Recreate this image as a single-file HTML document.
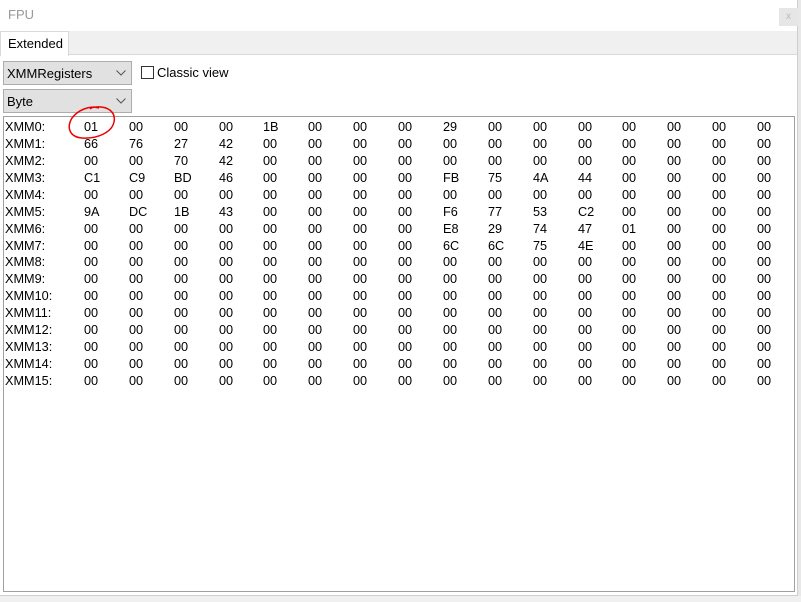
<!DOCTYPE html>
<html><head><meta charset="utf-8">
<style>
*{margin:0;padding:0;box-sizing:border-box}
body{width:801px;height:602px;background:#e8e8e8;position:relative;overflow:hidden;font-family:"Liberation Sans",Tahoma,sans-serif;font-size:13px;color:#000}
.win{position:absolute;left:0;top:0;width:798px;height:596px;background:#fff;border-right:1px solid #cfcfcf;border-bottom:1px solid #cfcfcf}
.title{position:absolute;left:8px;top:7px;font-size:13px;color:#999}
.close{position:absolute;left:779px;top:8px;width:19px;height:18px;background:#e6e6e6;color:#bbb;font-size:10px;text-align:center;line-height:18px}
.tabbar{position:absolute;left:0;top:31px;width:797px;height:24px;background:#f0f0f0;border-bottom:1px solid #d9d9d9}
.tab{position:absolute;left:0;top:0;width:69px;height:25px;background:#fff;border:1px solid #d9d9d9;border-bottom:none;padding:4px 0 0 7px;font-size:13px}
.combo{position:absolute;left:3px;width:129px;height:24px;background:#e1e1e1;border:1px solid #adadad;padding:4px 0 0 3px}
.combo svg{position:absolute;right:5px;top:8px}
.chk{position:absolute;left:141px;top:66px;width:13px;height:13px;border:1px solid #333;background:#fff}
.chkl{position:absolute;left:157px;top:65px}
.list{position:absolute;left:3px;top:116px;width:792px;height:476px;border:1px solid #a0a0a0;background:#fff}
.r{position:absolute;left:1px;height:17px;line-height:17px;white-space:nowrap;font-size:12.7px}
.r span{position:absolute;top:0}
</style></head><body>
<div class="win">
<div class="title">FPU</div>
<div class="close">x</div>
<div class="tabbar"><div class="tab">Extended</div></div>
<div class="combo" style="top:61px">XMMRegisters<svg width="10" height="6"><path d="M0.5 0.5 L5 5 L9.5 0.5" fill="none" stroke="#555" stroke-width="1"/></svg></div>
<div class="combo" style="top:89px">Byte<svg width="10" height="6"><path d="M0.5 0.5 L5 5 L9.5 0.5" fill="none" stroke="#555" stroke-width="1"/></svg></div>
<div class="chk"></div><div class="chkl">Classic view</div>
<div class="list" id="L"></div>
</div>
<div style="position:absolute;left:0;top:596px;width:801px;height:6px;background:#f0f0f0"></div>
<svg style="position:absolute;left:0;top:0" width="801" height="602"><path d="M99 108 C90 105 78 110 72 118 C66 128 70 137 82 138 C98 139 112 132 114 122 C116 112 108 106 96 107 C93 107 91 108 90 109" fill="none" stroke="#e00" stroke-width="1.5"/></svg>
<script>
var d=[
"01 00 00 00 1B 00 00 00 29 00 00 00 00 00 00 00",
"66 76 27 42 00 00 00 00 00 00 00 00 00 00 00 00",
"00 00 70 42 00 00 00 00 00 00 00 00 00 00 00 00",
"C1 C9 BD 46 00 00 00 00 FB 75 4A 44 00 00 00 00",
"00 00 00 00 00 00 00 00 00 00 00 00 00 00 00 00",
"9A DC 1B 43 00 00 00 00 F6 77 53 C2 00 00 00 00",
"00 00 00 00 00 00 00 00 E8 29 74 47 01 00 00 00",
"00 00 00 00 00 00 00 00 6C 6C 75 4E 00 00 00 00"];
var h="";
for(var i=0;i<16;i++){var v=(d[i]||"00 00 00 00 00 00 00 00 00 00 00 00 00 00 00 00").split(" ");
h+='<div class="r" style="top:'+(2+16.93*i)+'px"><span style="left:0">XMM'+i+':</span>';
for(var j=0;j<16;j++)h+='<span style="left:'+Math.round(79+j*44.87)+'px">'+v[j]+'</span>';
h+='</div>';}
document.getElementById("L").innerHTML=h;
</script>
</body></html>
